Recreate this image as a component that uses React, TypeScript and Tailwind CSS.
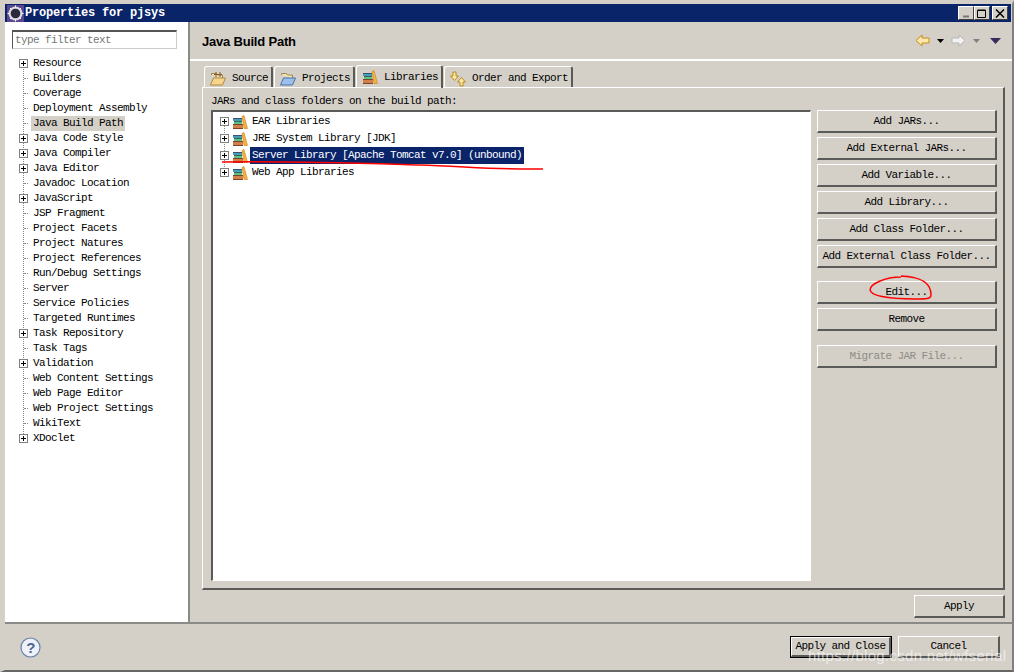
import type { ReactNode } from "react";

const font = "font-['Liberation_Mono',monospace] text-[11px] tracking-[-0.6px] text-black";

type Node = { label: string; plus?: boolean; sel?: boolean };

const nodes: Node[] = [
  { label: "Resource", plus: true },
  { label: "Builders" },
  { label: "Coverage" },
  { label: "Deployment Assembly" },
  { label: "Java Build Path", sel: true },
  { label: "Java Code Style", plus: true },
  { label: "Java Compiler", plus: true },
  { label: "Java Editor", plus: true },
  { label: "Javadoc Location" },
  { label: "JavaScript", plus: true },
  { label: "JSP Fragment" },
  { label: "Project Facets" },
  { label: "Project Natures" },
  { label: "Project References" },
  { label: "Run/Debug Settings" },
  { label: "Server" },
  { label: "Service Policies" },
  { label: "Targeted Runtimes" },
  { label: "Task Repository", plus: true },
  { label: "Task Tags" },
  { label: "Validation", plus: true },
  { label: "Web Content Settings" },
  { label: "Web Page Editor" },
  { label: "Web Project Settings" },
  { label: "WikiText" },
  { label: "XDoclet", plus: true },
];

const libs = [
  { label: "EAR Libraries" },
  { label: "JRE System Library [JDK]" },
  { label: "Server Library [Apache Tomcat v7.0] (unbound)", sel: true },
  { label: "Web App Libraries" },
];

function PlusBox() {
  return (
    <svg width="9" height="9" viewBox="0 0 9 9" className="block shrink-0">
      <rect x="0.5" y="0.5" width="8" height="8" fill="#fff" stroke="#808080" />
      <path d="M2 4.500h5M4.500 2v5" stroke="#000" />
    </svg>
  );
}

function Books() {
  return (
    <svg width="16" height="14" viewBox="0 0 16 14" className="block shrink-0">
      <g shapeRendering="crispEdges">
        <path d="M1 3h9v1H1z" fill="#35566e" />
        <path d="M1 4h9v2H1z" fill="#4a9ab8" />
        <path d="M2 6h8v1H2z" fill="#2f6a50" />
        <path d="M2 7h8v2H2z" fill="#5cc08a" />
        <path d="M1 9h10v1H1z" fill="#7a4526" />
        <path d="M1 10h10v3H1z" fill="#d08048" />
        <path d="M1 13h10v1H1z" fill="#7a4526" />
      </g>
      <path d="M10 1.500L12 0.500l3.500 13h-3.500z" fill="#f6b040" stroke="#c9821c" strokeWidth="0.6" />
    </svg>
  );
}

function FolderOpen({ blue }: { blue?: boolean }) {
  return (
    <svg width="16" height="14" viewBox="0 0 16 14" className="block shrink-0">
      <path d="M1.500 3V1.500h5l1 1.500h5v3" fill="#f5e4b0" stroke="#9a8a5a" />
      <path d="M3.500 6h12l-3 7H0.500z" fill={blue ? "#9cc0ec" : "#f6d68e"} stroke={blue ? "#4a70a8" : "#b08a3a"} />
      {!blue && <path d="M6 0v5M10 0v5M4 2.500h8" stroke="#8a5a20" strokeWidth="1" />}
    </svg>
  );
}

function OrderIcon() {
  return (
    <svg width="16" height="16" viewBox="0 0 16 16" className="block shrink-0">
      <path d="M3 1h3v4h2.500L4.500 9.500 0.500 5H3z" fill="#fbe7a0" stroke="#b88a20" />
      <path d="M10 15h3v-4h2.500L11.500 6.500 7.500 11H10z" fill="#fbe7a0" stroke="#b88a20" />
    </svg>
  );
}

function Btn({ children, w, h = "h-[23px]", dim }: { children: ReactNode; w?: string; h?: string; dim?: boolean }) {
  return (
    <div
      className={`flex ${h} ${w ?? "w-full"} items-center justify-center border-t border-l border-t-white border-l-white border-r-2 border-b-2 border-r-[#5a5a58] border-b-[#5a5a58] bg-[#d4d0c8] ${dim ? "text-[#8f8c86]" : ""}`}
    >
      {children}
    </div>
  );
}

function Tab({ icon, label, active }: { icon: ReactNode; label: string; active?: boolean }) {
  return (
    <div
      className={`flex items-center gap-[6px] rounded-t-[3px] border-t border-l border-t-white border-l-white border-r-2 border-r-[#5a5a58] pl-[5px] pr-[3px] ${
        active ? "relative z-10 -mb-px h-[23px]" : "h-[21px] pt-[3px]"
      }`}
    >
      {icon}
      <span>{label}</span>
    </div>
  );
}

export default function App() {
  return (
    <div className={`relative flex h-[672px] w-[1017px] overflow-hidden bg-[#d4d0c8] ${font}`}>
      <div className="flex h-full w-[1014px] flex-col border-t-[4px] border-l-[5px] border-r-[2px] border-b-[2px] border-t-[#d4d0c8] border-l-[#d4d0c8] border-r-[#808080] border-b-[#666]">
        <div className="flex h-[18px] w-[1006px] shrink-0 items-center justify-between bg-[#0a246a] pl-[2px] pr-[3px]">
          <div className="flex items-center gap-[1px]">
            <svg width="17" height="17" viewBox="0 0 17 17" className="block">
              <rect width="17" height="17" fill="#5a4790" />
              <circle cx="8.500" cy="8.500" r="7" fill="#d8d8e0" />
              <circle cx="8.500" cy="8.500" r="4.800" fill="#2a2a3a" />
              <path d="M8.500 0.500v2M8.500 14.500v2M0.500 8.500h2M14.500 8.500h2M3 3l1.500 1.500M12.500 12.500L14 14M3 14l1.500-1.500M12.500 4.500L14 3" stroke="#fff" />
            </svg>
            <span className="text-[12px] font-bold tracking-[-0.2px] text-white">Properties for pjsys</span>
          </div>
          <div className="flex">
            {["min", "max", "close"].map((k) => (
              <div key={k} className={`flex h-[14px] w-[16px] items-center justify-center border-t border-l border-t-white border-l-white border-r border-b border-r-[#404040] border-b-[#404040] bg-[#d4d0c8] ${k === "close" ? "ml-[2px]" : ""}`}>
                <svg width="10" height="9" viewBox="0 0 10 9">
                  {k === "min" && <path d="M2 7.500h6" stroke="#777" strokeWidth="2" />}
                  {k === "max" && <path d="M0.500 1.500h8v7h-8zM0.500 1h8" fill="none" stroke="#000" />}
                  {k === "close" && <path d="M1 0.500L9 8.500M9 0.500L1 8.500" stroke="#000" strokeWidth="1.500" />}
                </svg>
              </div>
            ))}
          </div>
        </div>

        <div className="flex min-h-0 flex-1 flex-col">
          <div className="flex h-[602px] shrink-0 border-b-2 border-b-[#8a8a86]">
            <div className="flex h-full w-[183px] shrink-0 flex-col bg-white">
              <div className="ml-[7px] mr-[11px] mt-[8px] flex h-[19px] items-center border-t-2 border-l border-t-[#555] border-l-[#555] border-r border-b border-r-[#ccc] border-b-[#ccc] pl-[2px] pt-[1px] text-[#777]">
                type filter text
              </div>
              <div className="relative ml-[9px] mt-[7px]">
                <div className="absolute left-[9px] top-[7px] h-[375px] border-l border-dotted border-l-[#888]" />
                {nodes.map((n) => (
                  <div key={n.label} className="relative flex h-[15px] items-center">
                    {n.plus ? (
                      <div className="relative z-10 ml-[5px] w-[9px]"><PlusBox /></div>
                    ) : (
                      <div className="ml-[10px] w-[4px] border-t border-dotted border-t-[#888]" />
                    )}
                    <span className={`ml-[3px] px-[2px] leading-[15px] ${n.sel ? "bg-[#d4d0c8]" : ""}`}>{n.label}</span>
                  </div>
                ))}
              </div>
            </div>

            <div className="flex min-w-0 flex-1 flex-col border-l-2 border-l-[#8a8a86]">
              <div className="flex h-[39px] shrink-0 items-center justify-between border-b-2 border-b-white pl-[12px] pr-[11px]">
                <span className="pt-[2px] font-['Liberation_Sans',sans-serif] text-[13px] font-bold tracking-[-0.2px]">Java Build Path</span>
                <div className="flex items-center gap-[7px]">
                  <svg width="15" height="13" viewBox="0 0 15 13"><path d="M1 6.500L7 1v3h7v5H7v3z" fill="#fde9a8" stroke="#c88a1a" /></svg>
                  <svg width="7" height="4" viewBox="0 0 7 4"><path d="M0 0h7L3.500 4z" fill="#000" /></svg>
                  <svg width="15" height="13" viewBox="0 0 15 13"><path d="M14 6.500L8 1v3H1v5h7v3z" fill="#f2f2f2" stroke="#b5b5b5" /></svg>
                  <svg width="7" height="4" viewBox="0 0 7 4"><path d="M0 0h7L3.500 4z" fill="#808080" /></svg>
                  <svg width="11" height="6" viewBox="0 0 11 6" className="ml-[3px]"><path d="M0 0h11L5.500 6z" fill="#3a2a60" /></svg>
                </div>
              </div>

              <div className="flex min-h-0 flex-1 flex-col pl-[12px] pr-[7px] pt-[5px]">
                <div className="flex h-[21px] items-end gap-[1px] pl-[2px]">
                  <Tab icon={<FolderOpen />} label="Source" />
                  <Tab icon={<FolderOpen blue />} label="Projects" />
                  <Tab icon={<Books />} label="Libraries" active />
                  <Tab icon={<OrderIcon />} label="Order and Export" />
                </div>
                <div className="flex h-[503px] flex-col border-t border-l border-t-white border-l-white border-r-2 border-b-2 border-r-[#5a5a58] border-b-[#5a5a58] pl-[8px] pr-[6px] pt-[6px]">
                  <div className="h-[15px] leading-[15px]">JARs and class folders on the build path:</div>
                  <div className="mt-[1px] flex min-h-0 gap-[6px]">
                    <div className="h-[471px] w-[600px] shrink-0 border-t-2 border-l-2 border-t-[#5a5a58] border-l-[#5a5a58] border-r border-b border-r-white border-b-white bg-white pl-[5px] pt-[1px]">
                      <div className="relative">
                        <div className="absolute left-[6px] top-[10px] h-[50px] border-l border-dotted border-l-[#888]" />
                        {libs.map((l) => (
                          <div key={l.label} className="relative flex h-[17px] items-center">
                            <div className="relative z-10 ml-[2px]"><PlusBox /></div>
                            <div className="ml-[3px]"><Books /></div>
                            <span className={`ml-[2px] px-[2px] leading-[17px] ${l.sel ? "bg-[#0a246a] text-white" : ""}`}>{l.label}</span>
                          </div>
                        ))}
                      </div>
                    </div>
                    <div className="flex w-[180px] shrink-0 flex-col">
                      <div className="flex flex-col gap-[4px]">
                        <Btn>Add JARs...</Btn>
                        <Btn>Add External JARs...</Btn>
                        <Btn>Add Variable...</Btn>
                        <Btn>Add Library...</Btn>
                        <Btn>Add Class Folder...</Btn>
                        <Btn>Add External Class Folder...</Btn>
                      </div>
                      <div className="mt-[13px] flex flex-col gap-[4px]">
                        <Btn>Edit...</Btn>
                        <Btn>Remove</Btn>
                      </div>
                      <div className="mt-[14px]">
                        <Btn dim>Migrate JAR File...</Btn>
                      </div>
                    </div>
                  </div>
                </div>
                <div className="mt-[5px] flex justify-end">
                  <Btn w="w-[91px]">Apply</Btn>
                </div>
              </div>
            </div>
          </div>

          <div className="relative flex flex-1 items-center justify-between pl-[15px] pr-[12px]">
            <svg width="21" height="21" viewBox="0 0 21 21" className="block">
              <circle cx="10.500" cy="10.500" r="9.500" fill="#eef2f8" stroke="#6a84ac" strokeWidth="1.200" />
              <text x="10.500" y="16" textAnchor="middle" fontFamily="Liberation Sans, sans-serif" fontWeight="700" fontSize="15" fill="#4a6690">?</text>
            </svg>
            <div className="flex gap-[6px]">
              <div className="border border-black">
                <Btn w="w-[100px]" h="h-[20px]">Apply and Close</Btn>
              </div>
              <Btn w="w-[102px]" h="h-[22px]">Cancel</Btn>
            </div>
            <div className="pointer-events-none absolute left-[803px] top-[21px] whitespace-nowrap font-['Liberation_Sans',sans-serif] text-[15px] tracking-[0.3px] text-white/60">
              https://blog.csdn.net/wfserial
            </div>
          </div>
        </div>
      </div>
      <div className="h-full w-[3px] bg-white" />

      {/* red pen marks */}
      <svg width="1017" height="672" viewBox="0 0 1017 672" fill="none" className="pointer-events-none absolute left-0 top-0">
        <path d="M222 162C290 161 350 163 420 165C460 166 500 170 543 169" stroke="#f00" strokeWidth="1.500" />
        <path d="M901 277C885 277 870 284 870 290C871 296 890 299 915 299C926 299 931 299 931 295C931 285 925 277 901 276" stroke="#f00" strokeWidth="1.500" />
      </svg>
    </div>
  );
}
